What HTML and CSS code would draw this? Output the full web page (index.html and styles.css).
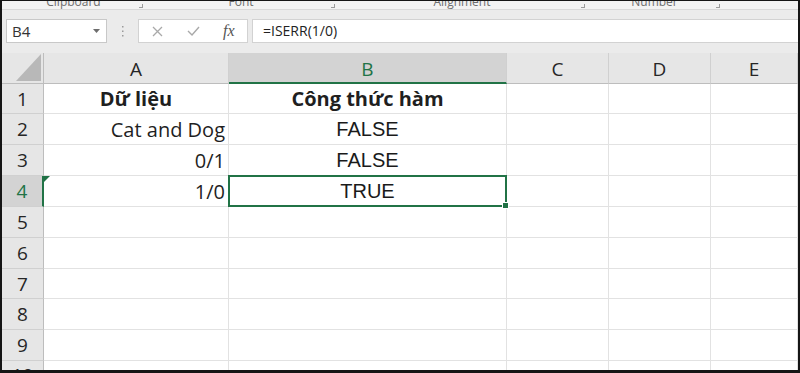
FILE: index.html
```html
<!DOCTYPE html>
<html lang="vi">
<head>
    <meta charset="UTF-8">
    <title>ISERR</title>
    <link rel="stylesheet" href="styles.css">
</head>
<body>

<div class="window">
    <div class="ribbon-labels">
        <div class="group group-clipboard"><span>Clipboard</span><i class="launcher"></i></div>
        <div class="group group-font"><span>Font</span><i class="launcher"></i></div>
        <div class="group group-align"><span>Alignment</span><i class="launcher"></i></div>
        <div class="group group-number"><span>Number</span><i class="launcher"></i></div>
        <div class="group group-rest"></div>
    </div>

    <div class="formula-bar">
        <div class="name-box">
            <span>B4</span>
            <svg width="7" height="4" viewBox="0 0 7 4"><path d="M0 0h7L3.5 4z" fill="#6d6d6d"/></svg>
        </div>
        <svg class="grip" width="3" height="11" viewBox="0 0 3 11">
            <rect x="1" y="0" width="1.5" height="1.5" fill="#9a9a9a"/>
            <rect x="1" y="4.5" width="1.5" height="1.5" fill="#9a9a9a"/>
            <rect x="1" y="9" width="1.5" height="1.5" fill="#9a9a9a"/>
        </svg>
        <div class="fx-buttons">
            <svg class="btn-cancel" width="11" height="11" viewBox="0 0 11 11"><path d="M1 1l9 9M10 1l-9 9" stroke="#a9a9a9" stroke-width="1.3" fill="none"/></svg>
            <svg class="btn-enter" width="13" height="10" viewBox="0 0 13 10"><path d="M1 5l4 4 7-8" stroke="#a9a9a9" stroke-width="1.4" fill="none"/></svg>
            <span class="btn-fx">fx</span>
        </div>
        <div class="formula-input">=ISERR(1/0)</div>
    </div>

    <div class="sheet">
        <div class="head corner">
            <svg width="26" height="28" viewBox="0 0 26 28"><path d="M25 0V27H0z" fill="#b8b8b8"/></svg>
        </div>
        <div class="head col-head">A</div>
        <div class="head col-head active">B</div>
        <div class="head col-head">C</div>
        <div class="head col-head">D</div>
        <div class="head col-head">E</div>

        <div class="head row-head">1</div>
        <div class="cell center bold">Dữ liệu</div>
        <div class="cell center bold">Công thức hàm</div>
        <div class="cell"></div><div class="cell"></div><div class="cell"></div>

        <div class="head row-head">2</div>
        <div class="cell right">Cat and Dog</div>
        <div class="cell center result">FALSE</div>
        <div class="cell"></div><div class="cell"></div><div class="cell"></div>

        <div class="head row-head">3</div>
        <div class="cell right">0/1</div>
        <div class="cell center result">FALSE</div>
        <div class="cell"></div><div class="cell"></div><div class="cell"></div>

        <div class="head row-head active">4</div>
        <div class="cell right flagged">1/0</div>
        <div class="cell center result selected">TRUE</div>
        <div class="cell"></div><div class="cell"></div><div class="cell"></div>

        <div class="head row-head">5</div>
        <div class="cell"></div><div class="cell"></div><div class="cell"></div><div class="cell"></div><div class="cell"></div>

        <div class="head row-head">6</div>
        <div class="cell"></div><div class="cell"></div><div class="cell"></div><div class="cell"></div><div class="cell"></div>

        <div class="head row-head">7</div>
        <div class="cell"></div><div class="cell"></div><div class="cell"></div><div class="cell"></div><div class="cell"></div>

        <div class="head row-head">8</div>
        <div class="cell"></div><div class="cell"></div><div class="cell"></div><div class="cell"></div><div class="cell"></div>

        <div class="head row-head">9</div>
        <div class="cell"></div><div class="cell"></div><div class="cell"></div><div class="cell"></div><div class="cell"></div>

        <div class="head row-head last">10</div>
        <div class="cell"></div><div class="cell"></div><div class="cell"></div><div class="cell"></div><div class="cell"></div>
    </div>
</div>

</body>
</html>
```

FILE: styles.css
```css
body {
    margin: 0;
    background: #fff;
}

.window {
    width: 800px;
    height: 373px;
    box-sizing: border-box;
    border: 2px solid #151515;
    border-top-width: 1px;
    border-bottom-width: 3px;
    display: flex;
    flex-direction: column;
    overflow: hidden;
    background: #fff;
    font-family: "Open Sans", sans-serif;
}

/* ribbon group captions, cut off at the top */
.ribbon-labels {
    flex: none;
    height: 8px;
    display: flex;
    background: #f3f3f3;
    border-bottom: 1px solid #d9d9d9;
    overflow: hidden;
}

.group {
    position: relative;
    display: flex;
    justify-content: center;
    font-size: 12px;
    line-height: 12px;
    color: #6e6e6e;
}

.group span {
    margin-top: -5px;
}

.group-clipboard { width: 143px; }
.group-font { width: 192px; }
.group-align { width: 250px; }
.group-number { width: 135px; }
.group-rest { flex: 1; }

.launcher {
    position: absolute;
    right: 2px;
    bottom: 1px;
    width: 3px;
    height: 3px;
    border-right: 1px solid #9c9c9c;
    border-bottom: 1px solid #9c9c9c;
}

/* name box + formula bar */
.formula-bar {
    flex: none;
    height: 43px;
    box-sizing: border-box;
    display: flex;
    align-items: flex-start;
    padding: 9px 0 0 4px;
    background: #ebebeb;
}

.name-box {
    width: 101px;
    height: 24px;
    box-sizing: border-box;
    display: flex;
    align-items: center;
    justify-content: space-between;
    padding: 0 6px 0 5px;
    border: 1px solid #c8c8c8;
    background: #fff;
    font-size: 15px;
    color: #333;
}

.grip {
    margin: 7px 14px 0 14px;
}

.fx-buttons {
    width: 110px;
    height: 24px;
    box-sizing: border-box;
    display: flex;
    align-items: center;
    padding-left: 13px;
    border: 1px solid #d2d2d2;
    background: #fff;
}

.btn-enter {
    margin-left: 24px;
}

.btn-fx {
    margin-left: 23px;
    font-family: "Liberation Serif", serif;
    font-style: italic;
    font-size: 16px;
    color: #555;
}

.formula-input {
    flex: 1;
    height: 24px;
    box-sizing: border-box;
    margin-left: 4px;
    padding-left: 10px;
    border: 1px solid #d2d2d2;
    border-right: none;
    background: #fff;
    font-size: 14px;
    line-height: 22px;
    color: #222;
}

/* grid */
.sheet {
    flex: 1;
    display: grid;
    grid-template-columns: 42px 185px 278px 102px 102px 1fr;
    grid-template-rows: 31px 30px 31px 31px 31px 31px 31px 30px 31px 31px 1fr;
    font-size: 20px;
    color: #1f1f1f;
}

.sheet > div {
    box-sizing: border-box;
    display: flex;
    align-items: center;
    min-width: 0;
    overflow: hidden;
    white-space: nowrap;
    border-right: 1px solid #e2e2e2;
    border-bottom: 1px solid #e2e2e2;
}

.head {
    justify-content: center;
    background: #e6e6e6;
    color: #262626;
    font-size: 19px;
}

.col-head {
    border-right-color: #d0d0d0 !important;
    border-bottom-color: #bdbdbd !important;
    padding-top: 2px;
}

.row-head {
    border-right-color: #bdbdbd !important;
    border-bottom-color: #d0d0d0 !important;
}

.corner {
    align-items: flex-end !important;
    justify-content: flex-end;
    padding: 0 1px 1px 0;
    border-right-color: #bdbdbd !important;
    border-bottom-color: #bdbdbd !important;
}

.head.active {
    background: #d3d3d3;
    color: #217346;
}

.col-head.active {
    border-bottom: 2px solid #217346 !important;
}

.row-head.active {
    border-right: 2px solid #217346 !important;
}

.row-head.last {
    align-items: flex-start;
    padding-top: 1px;
}

.cell.center {
    justify-content: center;
}

.cell.right {
    justify-content: flex-end;
    padding-right: 3px;
}

.cell.bold {
    font-weight: bold;
}

.cell.result {
    font-family: "Liberation Sans", Arial, sans-serif;
    color: #1a1a1a;
}

.cell.flagged {
    position: relative;
}

.cell.flagged::before {
    content: "";
    position: absolute;
    left: 0;
    top: 0;
    border-top: 6px solid #1e7145;
    border-right: 6px solid transparent;
}

.cell.selected {
    position: relative;
    overflow: visible !important;
}

.cell.selected::after {
    content: "";
    position: absolute;
    left: -1px;
    top: -1px;
    right: -1px;
    bottom: -1px;
    border: 2px solid #217346;
}

.cell.selected::before {
    content: "";
    position: absolute;
    right: -3px;
    bottom: -3px;
    width: 5px;
    height: 5px;
    background: #217346;
    border: 1px solid #fff;
    z-index: 1;
}
```
